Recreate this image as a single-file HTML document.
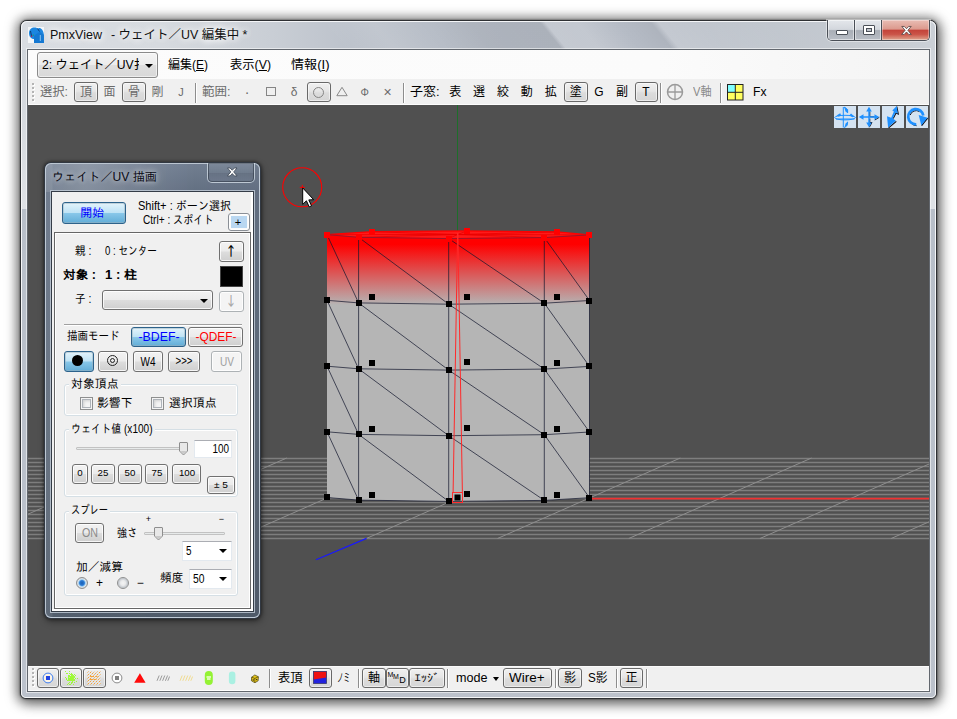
<!DOCTYPE html>
<html lang="ja"><head><meta charset="utf-8"><title>PmxView</title>
<style>
html,body{margin:0;padding:0;background:#fff;}
body{width:957px;height:719px;overflow:hidden;position:relative;font-family:"Liberation Sans","Noto Sans CJK JP",sans-serif;font-size:12px;}
.t{position:absolute;white-space:nowrap;}
.a{position:absolute;box-sizing:border-box;}
.tb{position:absolute;box-sizing:border-box;border:1px solid #696969;border-radius:3px;background:linear-gradient(#f0f0f0,#e6e6e6 45%,#dcdcdc 55%,#d6d6d6);box-shadow:inset 0 0 0 1px rgba(255,255,255,.55);}
.sep{position:absolute;width:1px;background:#8d8d8d;box-shadow:1px 0 0 #fff;}
.btn{position:absolute;box-sizing:border-box;border:1px solid #707070;border-radius:3px;background:linear-gradient(#f2f2f2,#ebebeb 48%,#dddddd 52%,#cfcfcf);box-shadow:inset 0 0 0 1px rgba(255,255,255,.8);}
.btn.dis{border-color:#adb2b5;background:#f4f4f4;}
.btn.blue{border-color:#2c628b;background:linear-gradient(#e3f3fb,#bfe3f5 48%,#88c7e9 52%,#62add7);box-shadow:inset 0 0 0 1px rgba(158,176,186,.5);}
.grp{position:absolute;box-sizing:border-box;border:1px solid #d5dfe5;border-radius:3px;box-shadow:inset 0 0 0 1px #fff;}
.cb{position:absolute;box-sizing:border-box;width:13px;height:13px;border:1px solid #8e8f8f;background:#f4f4f4;box-shadow:inset 0 0 0 1px #f4f4f4,inset 0 0 0 2px #aeb3b9,inset 2px 2px 3px 1px #cfd0d0;}
.combo{position:absolute;box-sizing:border-box;background:#fff;border:1px solid #e3e9ef;border-top-color:#abadb3;}
.arr{position:absolute;width:0;height:0;border-left:4px solid transparent;border-right:4px solid transparent;border-top:4px solid #000;}
</style></head><body>
<div class="a" style="left:20px;top:20px;width:917px;height:679px;border-radius:7px 7px 6px 6px;
box-shadow:0 0 2px rgba(0,0,0,.7),0 1px 12px 3px rgba(0,0,0,.5),2px 4px 14px rgba(0,0,0,.3);
border:1px solid #2e3033;background:#cfd5dc;"></div>
<div class="a" style="left:21px;top:21px;width:915px;height:677px;border-radius:6px 6px 5px 5px;border:1px solid rgba(255,255,255,.85);
background:
linear-gradient(51deg,rgba(255,255,255,0) 0,rgba(255,255,255,0) 250px,rgba(255,255,255,.10) 290px,rgba(255,255,255,0) 330px,rgba(0,0,0,.04) 366px,rgba(0,0,0,.05) 420px,rgba(255,255,255,.22) 424px,rgba(255,255,255,.2) 450px,rgba(255,255,255,0) 482px,rgba(0,0,0,.04) 506px,rgba(255,255,255,.2) 512px,rgba(255,255,255,.12) 545px,rgba(255,255,255,.05) 600px,rgba(255,255,255,0) 720px) 0 0/100% 28px no-repeat,
linear-gradient(to right,#d9dde2 0,#d6dadf 140px,#c9ced5 250px,#bcc2cb 330px,#b4bac4 480px,#b5bbc5 640px,#bdc3cb 740px,#c3c8cf 830px,#cbd0d6 915px) 0 0/100% 28px no-repeat,
linear-gradient(#d0d5db,#dfe2e6) 0 28px/100% 159px no-repeat,
linear-gradient(#b8bfc9,#bcc2cc) 0 187px/100% 500px no-repeat,
#bcc2cc;"></div>
<svg class="a" style="left:28px;top:27px" width="16" height="16" viewBox="0 0 16 16">
<rect width="16" height="16" fill="#f4f6f8"/>
<path d="M1 6 C1 2.5 3.5 0.5 6.5 0.5 C8 0.5 9 1 9.5 1.5 C11 0.5 13 1 14 2.5 C15.5 4.5 16 7 16 9 L16 16 L6 16 L6 12 C3 12 1 9.5 1 6 Z" fill="#1b86e0"/>
<path d="M6 16 L6 9 C8 7 10 5.5 12 5 L16 8 L16 16 Z" fill="#1478d2"/>
<path d="M2.5 4 L3.5 9 M9.5 1.5 L11.5 4.5" stroke="#0b3c78" stroke-width="1" fill="none"/>
<path d="M12.3 8 L12.3 14" stroke="#a8d4f4" stroke-width="0.8"/>
<circle cx="3.6" cy="9.3" r="0.8" fill="#c02050"/><circle cx="5.2" cy="8.2" r="0.6" fill="#20a040"/>
</svg>
<span class="t" style='left:50px;top:27px;font-size:12px;line-height:16px;color:#111;transform:scaleX(1.044);transform-origin:left center;text-shadow:0 0 6px #fff,0 0 8px #fff,0 0 10px rgba(255,255,255,.9);'>PmxView</span>
<span class="t" style='left:111.3px;top:27px;font-size:12px;line-height:16px;color:#111;transform:scaleX(1.039);transform-origin:left center;text-shadow:0 0 6px #fff,0 0 8px #fff,0 0 10px rgba(255,255,255,.9);'>- ウェイト／UV 編集中 *</span>
<div class="a" style="left:827px;top:20px;width:103px;height:21px;border:1px solid #4a4f57;border-top:none;border-radius:0 0 5px 5px;overflow:hidden;box-shadow:0 0 0 1px rgba(255,255,255,.45);">
<div class="a" style="left:0;top:0;width:27px;height:20px;background:linear-gradient(#e4e7eb,#d3d7dd 47%,#a9aeb6 53%,#b9bec6);border-right:1px solid #4a4f57;box-shadow:inset 0 0 0 1px rgba(255,255,255,.5)"></div>
<div class="a" style="left:27px;top:0;width:27px;height:20px;background:linear-gradient(#e4e7eb,#d3d7dd 47%,#a9aeb6 53%,#b9bec6);border-right:1px solid #4a4f57;box-shadow:inset 0 0 0 1px rgba(255,255,255,.5)"></div>
<div class="a" style="left:54px;top:0;width:47px;height:20px;background:linear-gradient(#e9bdb4,#dc9a8e 45%,#c4443a 52%,#cb5548 72%,#dfa58e);box-shadow:inset 0 0 0 1px rgba(255,255,255,.35)"></div>
</div>
<div class="a" style="left:836px;top:30px;width:12px;height:5px;background:#fff;border:1px solid #4b5058;border-radius:1px"></div>
<div class="a" style="left:863px;top:25px;width:12px;height:10px;border:1px solid #4b5058;background:#fff;border-radius:1px"></div><div class="a" style="left:866px;top:28px;width:6px;height:4px;border:1px solid #4b5058;background:#bfc4cb"></div>
<svg class="a" style="left:900px;top:24.5px" width="13" height="11" viewBox="0 0 16 13"><path d="M2.2 1.5 L5.3 1.5 L8 4.3 L10.7 1.5 L13.8 1.5 L9.7 6.3 L13.9 11.3 L10.7 11.3 L8 8.3 L5.3 11.3 L2.1 11.3 L6.3 6.3 Z" fill="#fff" stroke="#51403f" stroke-width="1" stroke-linejoin="round"/></svg>
<div class="a" style="left:27px;top:49px;width:903px;height:643px;border:1px solid #62676e;background:#f0f0f0;box-shadow:0 0 0 1px rgba(255,255,255,.55)"></div>
<div class="a" style="left:28px;top:50px;width:901px;height:29px;background:linear-gradient(to right,#fcfcfc 0,#fbfbfb 70%,#f4f4f4 100%)"></div>
<div class="a" style="left:28px;top:79px;width:901px;height:26px;background:#f0f0f0;border-bottom:1px solid #fdfdfd"></div>
<div class="a" style="left:28px;top:666px;width:901px;height:25px;background:#f0f0f0;border-top:1px solid #fafafa;border-bottom:1px solid #fff"></div>
<div class="tb" style="left:37px;top:52px;width:121px;height:26px;border-color:#8a8a8a;background:linear-gradient(#f4f4f4,#ececec 48%,#dedede 52%,#d8d8d8)"></div>
<div class="a" style="left:41px;top:55px;width:98px;height:20px;overflow:hidden">
<span class="t" style='left:0.5px;top:2px;font-size:12px;line-height:16px;color:#000;transform:scaleX(1.019);transform-origin:left center;'>2: ウェイト／UV扌</span>
</div>
<div class="arr" style="left:145px;top:64px"></div>
<span class="t" style='left:168px;top:57px;font-size:12px;line-height:16px;color:#000;'>編集(<u>E</u>)</span>
<span class="t" style='left:229.5px;top:57px;font-size:12px;line-height:16px;color:#000;transform:scaleX(1.025);transform-origin:left center;'>表示(<u>V</u>)</span>
<span class="t" style='left:291px;top:57px;font-size:12px;line-height:16px;color:#000;transform:scaleX(1.089);transform-origin:left center;'>情報(<u>I</u>)</span>
<div class="a" style="left:32px;top:83px;width:2px;height:2px;background:#b4b4b4;box-shadow:1px 1px 0 #fff"></div>
<div class="a" style="left:32px;top:87px;width:2px;height:2px;background:#b4b4b4;box-shadow:1px 1px 0 #fff"></div>
<div class="a" style="left:32px;top:91px;width:2px;height:2px;background:#b4b4b4;box-shadow:1px 1px 0 #fff"></div>
<div class="a" style="left:32px;top:95px;width:2px;height:2px;background:#b4b4b4;box-shadow:1px 1px 0 #fff"></div>
<div class="a" style="left:32px;top:99px;width:2px;height:2px;background:#b4b4b4;box-shadow:1px 1px 0 #fff"></div>
<span class="t" style='left:40px;top:84px;font-size:12px;line-height:16px;color:#6a6a6a;transform:scaleX(1.024);transform-origin:left center;'>選択:</span>
<div class="tb" style="left:74px;top:82px;width:24px;height:20px"></div>
<span class="t" style='left:86px;top:84px;font-size:12px;line-height:16px;color:#6a6a6a;transform:translateX(-50%);transform-origin:center center;'>頂</span>
<span class="t" style='left:109.5px;top:84px;font-size:12px;line-height:16px;color:#6a6a6a;transform:translateX(-50%);transform-origin:center center;'>面</span>
<div class="tb" style="left:122px;top:82px;width:24px;height:20px"></div>
<span class="t" style='left:134px;top:84px;font-size:12px;line-height:16px;color:#6a6a6a;transform:translateX(-50%);transform-origin:center center;'>骨</span>
<span class="t" style='left:157.5px;top:84px;font-size:12px;line-height:16px;color:#6a6a6a;transform:translateX(-50%);transform-origin:center center;'>剛</span>
<span class="t" style='left:181px;top:84px;font-size:11px;line-height:16px;color:#6a6a6a;transform:translateX(-50%);transform-origin:center center;'>J</span>
<div class="sep" style="left:195px;top:83px;height:20px"></div>
<span class="t" style='left:202px;top:84px;font-size:12px;line-height:16px;color:#6a6a6a;transform:scaleX(1.042);transform-origin:left center;'>範囲:</span>
<span class="t" style='left:247px;top:84px;font-size:14px;line-height:16px;color:#6a6a6a;transform:translateX(-50%);transform-origin:center center;'>·</span>
<div class="a" style="left:266px;top:87px;width:10px;height:9px;border:1px solid #858585"></div>
<span class="t" style='left:294px;top:83.5px;font-size:12px;line-height:16px;color:#6a6a6a;transform:translateX(-50%);transform-origin:center center;'>δ</span>
<div class="tb" style="left:307px;top:82px;width:24px;height:20px"></div>
<div class="a" style="left:313px;top:86.5px;width:11px;height:11px;border:1px solid #858585;border-radius:50%"></div>
<svg class="a" style="left:335px;top:85px" width="14" height="13" viewBox="0 0 14 13"><path d="M7 2.3 L12.2 10.7 L1.8 10.7 Z" fill="none" stroke="#8a8a8a" stroke-width="1"/></svg>
<span class="t" style='left:364.7px;top:84px;font-size:10.5px;line-height:16px;color:#6a6a6a;transform:translateX(-50%);transform-origin:center center;'>Φ</span>
<span class="t" style='left:387.5px;top:84px;font-size:14px;line-height:16px;color:#6a6a6a;transform:translateX(-50%);transform-origin:center center;'>×</span>
<div class="sep" style="left:403px;top:83px;height:20px"></div>
<span class="t" style='left:410px;top:84px;font-size:12px;line-height:16px;color:#000;transform:scaleX(1.079);transform-origin:left center;'>子窓:</span>
<span class="t" style='left:455.3px;top:84px;font-size:12px;line-height:16px;color:#000;transform:translateX(-50%);transform-origin:center center;'>表</span>
<span class="t" style='left:479px;top:84px;font-size:12px;line-height:16px;color:#000;transform:translateX(-50%);transform-origin:center center;'>選</span>
<span class="t" style='left:503px;top:84px;font-size:12px;line-height:16px;color:#000;transform:translateX(-50%);transform-origin:center center;'>絞</span>
<span class="t" style='left:526.8px;top:84px;font-size:12px;line-height:16px;color:#000;transform:translateX(-50%);transform-origin:center center;'>動</span>
<span class="t" style='left:550.8px;top:84px;font-size:12px;line-height:16px;color:#000;transform:translateX(-50%);transform-origin:center center;'>拡</span>
<div class="tb" style="left:564px;top:82px;width:24px;height:20px"></div>
<span class="t" style='left:575.8px;top:84px;font-size:12px;line-height:16px;color:#000;transform:translateX(-50%);transform-origin:center center;'>塗</span>
<span class="t" style='left:599px;top:84px;font-size:12px;line-height:16px;color:#000;transform:translateX(-50%);transform-origin:center center;'>G</span>
<span class="t" style='left:622px;top:84px;font-size:12px;line-height:16px;color:#000;transform:translateX(-50%);transform-origin:center center;'>副</span>
<div class="tb" style="left:635px;top:82px;width:23px;height:20px"></div>
<span class="t" style='left:646px;top:84px;font-size:12px;line-height:16px;color:#000;transform:translateX(-50%);transform-origin:center center;'>T</span>
<div class="sep" style="left:660px;top:83px;height:20px"></div>
<svg class="a" style="left:666px;top:83px" width="18" height="18" viewBox="0 0 18 18"><circle cx="9" cy="9" r="7.5" fill="none" stroke="#9a9a9a" stroke-width="1.5"/><path d="M9 1.5 V16.5 M1.5 9 H16.5" stroke="#9a9a9a" stroke-width="1.3"/></svg>
<span class="t" style='left:692.5px;top:84px;font-size:12px;line-height:16px;color:#8a8a8a;transform:scaleX(0.924);transform-origin:left center;'>V軸</span>
<div class="sep" style="left:720px;top:83px;height:20px"></div>
<svg class="a" style="left:727px;top:84px" width="17" height="17" viewBox="0 0 17 17"><rect x="0.5" y="0.5" width="15.5" height="15.5" fill="#ffff60" stroke="#222"/><rect x="1" y="1" width="7" height="7" fill="#80ffff"/><path d="M8.3 0.5 V16 M0.5 8.3 H16" stroke="#222" stroke-width="1"/></svg>
<span class="t" style='left:752.5px;top:84px;font-size:13px;line-height:16px;color:#000;transform:scaleX(0.934);transform-origin:left center;'>Fx</span>
<svg class="a" style="left:28px;top:105px" width="901" height="561" viewBox="28 105 901 561">
<defs><linearGradient id="cg" gradientUnits="userSpaceOnUse" x1="0" y1="231" x2="0" y2="305"><stop offset="0" stop-color="#ff0000"/><stop offset="0.18" stop-color="#ff0000"/><stop offset="1" stop-color="#b5b5b5"/></linearGradient></defs>
<rect x="28" y="105" width="901" height="561" fill="#505050"/>
<path d="M28 458.5 H929 M28 462.5 H929 M28 466.5 H929 M28 470.5 H929 M28 474.5 H929 M28 478.5 H929 M28 482.5 H929 M28 486.5 H929 M28 490.5 H929 M28 494.5 H929 M28 498.5 H929 M28 502.5 H929 M28 506.5 H929 M28 510.5 H929 M28 514.5 H929 M28 518.5 H929 M28 522.5 H929 M28 526.5 H929 M28 530.5 H929 M28 534.5 H929 M28 538.5 H929" stroke="#7e7e7e" stroke-width="1.5" fill="none"/>
<path d="M24.3 458 L-158.454 538.5 M155.5 458 L-27.254 538.5 M286.7 458 L103.946 538.5 M417.9 458 L235.146 538.5 M549.1 458 L366.346 538.5 M680.3 458 L497.546 538.5 M811.5 458 L628.746 538.5 M942.7 458 L759.946 538.5 M1073.9 458 L891.146 538.5" stroke="#8e8e8e" stroke-width="1" fill="none"/>
<path d="M589 498.6 H929" stroke="#f03232" stroke-width="1.7"/>
<path d="M366.6 538.4 L316 559.7" stroke="#1818ff" stroke-width="1.2"/>
<path d="M457.5 105 V232" stroke="#1d6e2a" stroke-width="1"/>
<polygon points="327,234.7 372,231.7 467,230.9 557,231.9 589.5,234.9 589.5,497.7 544.3,500.4 448.7,501.4 358.6,500.1 327,497.5" fill="url(#cg)"/>
<path d="M358.6 237.3 L358.6 500.1 M448.7 238.6 L448.7 501.4 M544.3 237.6 L544.3 500.4 M589.5 234.9 L589.5 497.7 M327 300.3 L358.6 302.9 L448.7 304.2 L544.3 303.2 L589.5 300.5 M327 366.2 L358.6 368.8 L448.7 370.1 L544.3 369.1 L589.5 366.4 M327 431.8 L358.6 434.4 L448.7 435.7 L544.3 434.7 L589.5 432 M327 497.5 L358.6 500.1 L448.7 501.4 L544.3 500.4 L589.5 497.7 M327 234.7 L358.6 302.9 M358.6 237.3 L448.7 304.2 M448.7 238.6 L544.3 303.2 M544.3 237.6 L589.5 300.5 M327 300.3 L358.6 368.8 M358.6 302.9 L448.7 370.1 M448.7 304.2 L544.3 369.1 M544.3 303.2 L589.5 366.4 M327 366.2 L358.6 434.4 M358.6 368.8 L448.7 435.7 M448.7 370.1 L544.3 434.7 M544.3 369.1 L589.5 432 M327 431.8 L358.6 500.1 M358.6 434.4 L448.7 501.4 M448.7 435.7 L544.3 500.4 M544.3 434.7 L589.5 497.7" stroke="#14182e" stroke-width="0.8" fill="none" stroke-opacity=".9"/>
<polygon points="327,234.7 372,231.7 467,230.9 557,231.9 589.5,234.9 544.3,237.6 448.7,238.6 358.6,237.3" fill="#ff1a1a" stroke="#ff0000" stroke-width="1.2"/>
<path d="M457.5 234.5 L327 234.7 M457.5 234.5 L372 231.7 M457.5 234.5 L467 230.9 M457.5 234.5 L557 231.9 M457.5 234.5 L589.5 234.9 M457.5 234.5 L544.3 237.6 M457.5 234.5 L448.7 238.6 M457.5 234.5 L358.6 237.3" stroke="#e80000" stroke-width="0.8" fill="none"/>
<path d="M327 234.7 L358.6 237.3 L448.7 238.6 L544.3 237.6 L589.5 234.9" stroke="#3a2a55" stroke-width="0.7" fill="none" stroke-opacity=".7"/>
<path d="M457.6 233 L453.1 492.5 M457.9 233 L462.4 492.5" stroke="#ff2a2a" stroke-width="1" fill="none"/>
<rect x="452.5" y="492.5" width="10" height="10" fill="none" stroke="#ff3030" stroke-width="1"/>
<rect x="324" y="232" width="6" height="6" fill="#ff0000"/><rect x="356" y="234" width="6" height="6" fill="#ff0000"/><rect x="446" y="236" width="6" height="6" fill="#ff0000"/><rect x="541" y="235" width="6" height="6" fill="#ff0000"/><rect x="586" y="232" width="6" height="6" fill="#ff0000"/><rect x="369" y="229" width="6" height="6" fill="#ff0000"/><rect x="464" y="228" width="6" height="6" fill="#ff0000"/><rect x="554" y="229" width="6" height="6" fill="#ff0000"/><rect x="324" y="297" width="6" height="6" fill="#000"/><rect x="356" y="300" width="6" height="6" fill="#000"/><rect x="446" y="301" width="6" height="6" fill="#000"/><rect x="541" y="300" width="6" height="6" fill="#000"/><rect x="586" y="298" width="6" height="6" fill="#000"/><rect x="369" y="294" width="6" height="6" fill="#000"/><rect x="464" y="294" width="6" height="6" fill="#000"/><rect x="554" y="294" width="6" height="6" fill="#000"/><rect x="324" y="363" width="6" height="6" fill="#000"/><rect x="356" y="366" width="6" height="6" fill="#000"/><rect x="446" y="367" width="6" height="6" fill="#000"/><rect x="541" y="366" width="6" height="6" fill="#000"/><rect x="586" y="363" width="6" height="6" fill="#000"/><rect x="369" y="360" width="6" height="6" fill="#000"/><rect x="464" y="359" width="6" height="6" fill="#000"/><rect x="554" y="360" width="6" height="6" fill="#000"/><rect x="324" y="429" width="6" height="6" fill="#000"/><rect x="356" y="431" width="6" height="6" fill="#000"/><rect x="446" y="433" width="6" height="6" fill="#000"/><rect x="541" y="432" width="6" height="6" fill="#000"/><rect x="586" y="429" width="6" height="6" fill="#000"/><rect x="369" y="426" width="6" height="6" fill="#000"/><rect x="464" y="425" width="6" height="6" fill="#000"/><rect x="554" y="426" width="6" height="6" fill="#000"/><rect x="324" y="494" width="6" height="6" fill="#000"/><rect x="356" y="497" width="6" height="6" fill="#000"/><rect x="446" y="498" width="6" height="6" fill="#000"/><rect x="541" y="497" width="6" height="6" fill="#000"/><rect x="586" y="495" width="6" height="6" fill="#000"/><rect x="369" y="492" width="6" height="6" fill="#000"/><rect x="464" y="491" width="6" height="6" fill="#000"/><rect x="554" y="492" width="6" height="6" fill="#000"/>
<rect x="454.5" y="494.5" width="6" height="6" fill="#000"/>
<circle cx="302.2" cy="187.3" r="19.5" fill="none" stroke="#ff0000" stroke-width="1.1"/>
<path d="M299.8 187.4 H304.8 M302.3 184.9 V189.9" stroke="#ff0000" stroke-width="1"/>
<path d="M302.7 187.9 V204.4 L306.4 200.8 L309.2 206.9 L311.5 205.8 L308.8 199.9 L313.7 199.7 Z" fill="#fff" stroke="#000" stroke-width="1" stroke-linejoin="miter"/>
<rect x="834" y="106" width="22" height="22" fill="#d5e3f1"/><rect x="858" y="106" width="22" height="22" fill="#d5e3f1"/><rect x="882" y="106" width="22" height="22" fill="#d5e3f1"/><rect x="906" y="106" width="22" height="22" fill="#d5e3f1"/>
<g transform="translate(834,106)" stroke="#1e90ff" fill="none" stroke-width="1"><path d="M9.3 1 V21.5 M2 13 H20.5"/><ellipse cx="11" cy="11.6" rx="10.3" ry="2.3"/><path d="M10 1.2 C13 1.5 14 5 13.6 7 M10.2 21.5 C12.5 21 13.8 18.5 13.6 16"/><path d="M10 0.8 L14.2 3.8 L13.8 7.3 L11.5 5.5 Z M10.5 21.5 L13.3 19.3 L14 15.3 L11.6 17.5 Z M2.5 9.5 L6.2 7.3 L7.3 9.8 L4.5 10.5 Z M20.5 10.5 L17 7.5 L15.5 9.3 L18.3 11.3 Z" fill="#1e90ff" stroke="none"/></g>
<g transform="translate(858,106)"><path d="M11.8 5.5 V10.8 H16.5 M16.8 14 L21.3 11.3 M11.8 12.5 V16.5 H14 L11.3 21.3" stroke="#0a0a14" stroke-width="0.9" fill="none"/><path d="M11 0.8 L13.8 5.5 H11.7 V10.3 H16.5 V8.2 L21.2 11 L16.5 13.8 V11.7 H11.7 V16.5 H13.8 L11 21.2 L8.2 16.5 H10.3 V11.7 H5.5 V13.8 L0.8 11 L5.5 8.2 V10.3 H10.3 V5.5 H8.2 Z" fill="#1e90ff"/></g>
<g transform="translate(882,106)"><path d="M6.6 21.8 L14.3 15.4 M11.2 12.6 L14.3 6.6 M14.8 0.5 L16.3 8 L14 7" stroke="#0a0a14" stroke-width="1.1" fill="none"/><path d="M14.7 0 L15.8 7.8 L13.6 6.5 L10.9 12.6 L13.8 14.8 L6.1 21.6 L5 10.3 L9.2 11.8 L11.9 5.6 L10.3 4.4 Z" fill="#1e90ff"/></g>
<g transform="translate(906,106)"><path d="M10.5 19.7 A8.3 8.3 0 0 1 5 17" stroke="#0a0a14" stroke-width="1" fill="none"/><path d="M4.2 9 A6.2 6.2 0 0 1 13.5 5.6" stroke="#0a0a14" stroke-width="1" fill="none"/><path d="M15.6 19.7 L21.6 12.2" stroke="#0a0a14" stroke-width="1.2" fill="none"/><path d="M10.3 18.3 A7.6 7.6 0 1 1 17.3 9.5" stroke="#1e90ff" stroke-width="2.7" fill="none"/><path d="M12.7 9 L21.5 11.8 L15.3 19.6 Z" fill="#1e90ff"/></g>
</svg>
<div class="a" style="left:44px;top:162px;width:217px;height:457px;border-radius:7px;border:1px solid rgba(20,22,26,.55);
box-shadow:0 0 3px 1px rgba(0,0,0,.35),1px 3px 7px rgba(0,0,0,.35);background:#556274"></div>
<div class="a" style="left:45px;top:163px;width:215px;height:455px;border-radius:6px;border:1px solid rgba(214,224,234,.8);
background:linear-gradient(to right,rgba(255,255,255,.12) 0,rgba(255,255,255,.20) 40px,rgba(255,255,255,.06) 110px,rgba(255,255,255,0) 150px) 0 0/100% 28px no-repeat,
linear-gradient(to right,rgba(255,255,255,.07) 0,rgba(255,255,255,.07) 6px,rgba(255,255,255,0) 7px,rgba(0,0,0,.04) 100%),linear-gradient(#748194 0,#667386 28px,#5f6b7b 55%,#525e6d 100%)"></div>
<div class="a" style="left:50px;top:190px;width:205px;height:423px;border:1px solid rgba(196,206,217,.8);"></div>
<div class="a" style="left:51px;top:191px;width:203px;height:421px;border:1px solid #343c47;background:#f0f0f0;box-shadow:inset -2px -2px 0 #fff"></div>
<span class="t" style='left:52px;top:168.5px;font-size:12px;line-height:16px;color:#0a0a14;font-family:"Liberation Sans","IPAGothic","Noto Sans CJK JP",sans-serif;transform:scaleX(1.009);transform-origin:left center;text-shadow:0 0 5px rgba(255,255,255,.5),0 0 8px rgba(255,255,255,.4),0 0 11px rgba(255,255,255,.3);'>ウェイト／UV 描画</span>
<div class="a" style="left:207px;top:163px;width:48px;height:20px;border:1px solid rgba(214,224,234,.75);border-top:none;border-radius:0 0 5px 5px;background:linear-gradient(rgba(255,255,255,.10),rgba(255,255,255,.03) 50%,rgba(0,0,0,.05) 52%,rgba(255,255,255,.04));box-shadow:inset 0 0 0 1px rgba(40,50,62,.55)"></div>
<svg class="a" style="left:225.5px;top:167px" width="12.5" height="10" viewBox="0 0 15 12"><path d="M1.8 1.2 L4.9 1.2 L7.5 3.9 L10.1 1.2 L13.2 1.2 L9.2 5.9 L13.3 10.7 L10.1 10.7 L7.5 7.9 L4.9 10.7 L1.7 10.7 L5.8 5.9 Z" fill="#fff" stroke="#3c4654" stroke-width="1" stroke-linejoin="round"/></svg>
<div class="btn blue" style="left:62px;top:202px;width:64px;height:22px"></div>
<span class="t" style='left:92.3px;top:205px;font-size:12px;line-height:16px;color:#0000ff;font-family:"Liberation Sans","IPAGothic","Noto Sans CJK JP",sans-serif;transform:translateX(-50%);transform-origin:center center;'>開始</span>
<span class="t" style='left:137.8px;top:198px;font-size:12px;line-height:16px;color:#000;font-family:"Liberation Sans","IPAGothic","Noto Sans CJK JP",sans-serif;transform:scaleX(0.921);transform-origin:left center;'>Shift+ : ボーン選択</span>
<span class="t" style='left:142.6px;top:212px;font-size:12px;line-height:16px;color:#000;font-family:"Liberation Sans","IPAGothic","Noto Sans CJK JP",sans-serif;transform:scaleX(0.843);transform-origin:left center;'>Ctrl+ : スポイト</span>
<div class="btn" style="left:228px;top:213px;width:22px;height:18px;border-color:#8a8f96;background:#fbfbfb"></div><div class="a" style="left:231px;top:216px;width:16px;height:12px;background:#b9d7f1"></div>
<span class="t" style='left:238px;top:213.5px;font-size:11px;line-height:16px;color:#000;transform:translateX(-50%);transform-origin:center center;'>+</span>
<div class="a" style="left:54px;top:232px;width:197px;height:377px;border:1px solid #666;box-shadow:inset 0 0 0 1px #fff;background:#f0f0f0"></div>
<span class="t" style='left:74.5px;top:243px;font-size:12px;line-height:16px;color:#000;font-family:"Liberation Sans","IPAGothic","Noto Sans CJK JP",sans-serif;transform:scaleX(0.884);transform-origin:left center;'>親 :</span>
<span class="t" style='left:105px;top:243px;font-size:12px;line-height:16px;color:#000;font-family:"Liberation Sans","IPAGothic","Noto Sans CJK JP",sans-serif;transform:scaleX(0.804);transform-origin:left center;'>0 : センター</span>
<div class="btn" style="left:219px;top:241px;width:25px;height:21px"></div>
<span class="t" style='left:231px;top:242.5px;font-size:13.5px;line-height:16px;color:#000;font-family:"IPAGothic","Noto Sans CJK JP",sans-serif;transform:translateX(-50%);transform-origin:center center;'>↑</span>
<span class="t" style='left:62.5px;top:266.8px;font-size:12px;line-height:16px;color:#000;font-weight:bold;font-family:"Liberation Sans","IPAGothic","Noto Sans CJK JP",sans-serif;transform:scaleX(1.053);transform-origin:left center;'>対象 :</span>
<span class="t" style='left:105px;top:266.8px;font-size:12px;line-height:16px;color:#000;font-weight:bold;font-family:"Liberation Sans","IPAGothic","Noto Sans CJK JP",sans-serif;transform:scaleX(1.091);transform-origin:left center;'>1 : 柱</span>
<div class="a" style="left:220px;top:266px;width:23px;height:21px;background:#000;border:1px solid #444"></div>
<span class="t" style='left:75px;top:291.3px;font-size:12px;line-height:16px;color:#000;font-family:"Liberation Sans","IPAGothic","Noto Sans CJK JP",sans-serif;transform:scaleX(0.884);transform-origin:left center;'>子 :</span>
<div class="btn" style="left:102px;top:290px;width:111px;height:20px"></div>
<div class="arr" style="left:200.3px;top:298.7px;border-left-width:4px;border-right-width:4px;border-top-width:4.5px"></div>
<div class="btn dis" style="left:219px;top:291px;width:25px;height:21px"></div>
<span class="t" style='left:231px;top:292.5px;font-size:13.5px;line-height:16px;color:#a8a8a8;font-family:"IPAGothic","Noto Sans CJK JP",sans-serif;transform:translateX(-50%);transform-origin:center center;'>↓</span>
<div class="a" style="left:64px;top:324px;width:178px;height:2px;border-top:1px solid #a0a0a0;border-bottom:1px solid #fff"></div>
<span class="t" style='left:67px;top:327.5px;font-size:12px;line-height:16px;color:#000;font-family:"Liberation Sans","IPAGothic","Noto Sans CJK JP",sans-serif;transform:scaleX(0.875);transform-origin:left center;'>描画モード</span>
<div class="btn blue" style="left:131px;top:327px;width:55px;height:20px"></div>
<span class="t" style='left:158.5px;top:329.2px;font-size:12.5px;line-height:16px;color:#0000ff;font-family:"Liberation Sans","IPAGothic","Noto Sans CJK JP",sans-serif;transform:translateX(-50%) scaleX(0.984);transform-origin:center center;'>-BDEF-</span>
<div class="btn" style="left:188px;top:327px;width:55px;height:20px"></div>
<span class="t" style='left:215.5px;top:329.2px;font-size:12.5px;line-height:16px;color:#ff0000;font-family:"Liberation Sans","IPAGothic","Noto Sans CJK JP",sans-serif;transform:translateX(-50%) scaleX(0.952);transform-origin:center center;'>-QDEF-</span>
<div class="btn blue" style="left:64px;top:351px;width:30px;height:21px"></div>
<div class="a" style="left:72px;top:355px;width:11px;height:11px;border-radius:50%;background:#000"></div>
<div class="btn" style="left:98px;top:351px;width:30px;height:21px"></div>
<div class="a" style="left:106.5px;top:355px;width:11px;height:11px;border-radius:50%;border:1px solid #222"></div><div class="a" style="left:109.5px;top:358px;width:5px;height:5px;border-radius:50%;border:1px solid #222"></div>
<div class="btn" style="left:133px;top:351px;width:30px;height:21px"></div>
<span class="t" style='left:148px;top:353.5px;font-size:12px;line-height:16px;color:#000;font-family:"Liberation Sans","IPAGothic","Noto Sans CJK JP",sans-serif;transform:translateX(-50%) scaleX(0.833);transform-origin:center center;'>W4</span>
<div class="btn" style="left:168px;top:351px;width:32px;height:21px"></div>
<span class="t" style='left:183.5px;top:353.3px;font-size:12px;line-height:16px;color:#000;font-family:"Liberation Sans","IPAGothic","Noto Sans CJK JP",sans-serif;transform:translateX(-50%) scaleX(0.808);transform-origin:center center;'>&gt;&gt;&gt;</span>
<div class="btn dis" style="left:211px;top:351px;width:31px;height:21px"></div>
<span class="t" style='left:226.5px;top:353.5px;font-size:12px;line-height:16px;color:#a0a0a0;font-family:"Liberation Sans","IPAGothic","Noto Sans CJK JP",sans-serif;transform:translateX(-50%) scaleX(0.840);transform-origin:center center;'>UV</span>
<div class="grp" style="left:64px;top:384px;width:174px;height:32px"></div>
<div class="a" style="left:69px;top:378px;width:52px;height:12px;background:#f0f0f0"></div>
<span class="t" style='left:71.3px;top:376.3px;font-size:12px;line-height:16px;color:#000;font-family:"Liberation Sans","IPAGothic","Noto Sans CJK JP",sans-serif;transform:scaleX(0.990);transform-origin:left center;'>対象頂点</span>
<div class="cb" style="left:80px;top:397px"></div>
<span class="t" style='left:97.2px;top:395px;font-size:12px;line-height:16px;color:#000;font-family:"Liberation Sans","IPAGothic","Noto Sans CJK JP",sans-serif;transform:scaleX(0.986);transform-origin:left center;'>影響下</span>
<div class="cb" style="left:151px;top:397px"></div>
<span class="t" style='left:168.6px;top:395px;font-size:12px;line-height:16px;color:#000;font-family:"Liberation Sans","IPAGothic","Noto Sans CJK JP",sans-serif;transform:scaleX(0.990);transform-origin:left center;'>選択頂点</span>
<div class="grp" style="left:64px;top:429px;width:174px;height:68px"></div>
<div class="a" style="left:69px;top:423px;width:86px;height:12px;background:#f0f0f0"></div>
<span class="t" style='left:71.3px;top:420.8px;font-size:12px;line-height:16px;color:#000;font-family:"Liberation Sans","IPAGothic","Noto Sans CJK JP",sans-serif;transform:scaleX(0.837);transform-origin:left center;'>ウェイト値 (x100)</span>
<div class="a" style="left:76px;top:447px;width:109px;height:3px;border:1px solid #c2c2c2;border-radius:1px;background:#e7eaea"></div>
<svg class="a" style="left:179px;top:442px" width="10" height="14" viewBox="0 0 10 14"><path d="M1 0.5 H8 Q8.5 0.5 8.5 1 V9 L4.5 13 L0.5 9 V1 Q0.5 0.5 1 0.5 Z" fill="#e8e8e8" stroke="#8e8e8e" stroke-width="1"/><path d="M1.5 9 L4.5 12 L7.5 9" fill="#c9c9c9" stroke="none"/></svg>
<div class="a" style="left:194px;top:440px;width:38px;height:18px;background:#fff;border:1px solid #e3e9ef;border-top-color:#abadb3"></div>
<span class="t" style='left:229px;top:441.3px;font-size:12px;line-height:16px;color:#000;font-family:"Liberation Sans","IPAGothic","Noto Sans CJK JP",sans-serif;transform:translateX(-100%) scaleX(0.824);transform-origin:right center;'>100</span>
<div class="btn" style="left:72px;top:464px;width:16px;height:20px"></div>
<span class="t" style='left:80px;top:465.3px;font-size:9.5px;line-height:16px;color:#000;font-family:"Liberation Sans","IPAGothic","Noto Sans CJK JP",sans-serif;transform:translateX(-50%) scaleX(1.019);transform-origin:center center;'>0</span>
<div class="btn" style="left:91px;top:464px;width:24px;height:20px"></div>
<span class="t" style='left:103px;top:465.3px;font-size:9.5px;line-height:16px;color:#000;font-family:"Liberation Sans","IPAGothic","Noto Sans CJK JP",sans-serif;transform:translateX(-50%) scaleX(1.021);transform-origin:center center;'>25</span>
<div class="btn" style="left:118px;top:464px;width:24px;height:20px"></div>
<span class="t" style='left:130px;top:465.3px;font-size:9.5px;line-height:16px;color:#000;font-family:"Liberation Sans","IPAGothic","Noto Sans CJK JP",sans-serif;transform:translateX(-50%) scaleX(1.021);transform-origin:center center;'>50</span>
<div class="btn" style="left:145px;top:464px;width:23px;height:20px"></div>
<span class="t" style='left:156.5px;top:465.3px;font-size:9.5px;line-height:16px;color:#000;font-family:"Liberation Sans","IPAGothic","Noto Sans CJK JP",sans-serif;transform:translateX(-50%) scaleX(1.021);transform-origin:center center;'>75</span>
<div class="btn" style="left:172px;top:464px;width:29px;height:20px"></div>
<span class="t" style='left:186.5px;top:465.3px;font-size:9.5px;line-height:16px;color:#000;font-family:"Liberation Sans","IPAGothic","Noto Sans CJK JP",sans-serif;transform:translateX(-50%) scaleX(1.021);transform-origin:center center;'>100</span>
<div class="btn" style="left:207px;top:476px;width:28px;height:18px"></div>
<span class="t" style='left:221px;top:476.6px;font-size:9.5px;line-height:16px;color:#000;font-family:"Liberation Sans","IPAGothic","Noto Sans CJK JP",sans-serif;transform:translateX(-50%) scaleX(1.065);transform-origin:center center;'>± 5</span>
<div class="grp" style="left:64px;top:511px;width:174px;height:85px"></div>
<div class="a" style="left:69px;top:505px;width:41px;height:12px;background:#f0f0f0"></div>
<span class="t" style='left:71.3px;top:502.3px;font-size:12px;line-height:16px;color:#000;font-family:"Liberation Sans","IPAGothic","Noto Sans CJK JP",sans-serif;transform:scaleX(0.771);transform-origin:left center;'>スプレー</span>
<span class="t" style='left:148.3px;top:510.5px;font-size:9px;line-height:16px;color:#000;font-family:"Liberation Sans","IPAGothic","Noto Sans CJK JP",sans-serif;transform:translateX(-50%);transform-origin:center center;'>+</span>
<span class="t" style='left:221.3px;top:510.5px;font-size:9px;line-height:16px;color:#000;font-family:"Liberation Sans","IPAGothic","Noto Sans CJK JP",sans-serif;transform:translateX(-50%);transform-origin:center center;'>−</span>
<div class="btn" style="left:75px;top:523px;width:29px;height:20px"></div>
<span class="t" style='left:89.5px;top:525px;font-size:12px;line-height:16px;color:#8a8a8a;font-family:"Liberation Sans","IPAGothic","Noto Sans CJK JP",sans-serif;transform:translateX(-50%) scaleX(0.889);transform-origin:center center;'>ON</span>
<span class="t" style='left:116.5px;top:525px;font-size:12px;line-height:16px;color:#000;font-family:"Liberation Sans","IPAGothic","Noto Sans CJK JP",sans-serif;transform:scaleX(0.854);transform-origin:left center;'>強さ</span>
<div class="a" style="left:144px;top:532px;width:81px;height:3px;border:1px solid #c2c2c2;border-radius:1px;background:#e7eaea"></div>
<svg class="a" style="left:154px;top:527px" width="10" height="14" viewBox="0 0 10 14"><path d="M1 0.5 H8 Q8.5 0.5 8.5 1 V9 L4.5 13 L0.5 9 V1 Q0.5 0.5 1 0.5 Z" fill="#e8e8e8" stroke="#8e8e8e" stroke-width="1"/><path d="M1.5 9 L4.5 12 L7.5 9" fill="#c9c9c9" stroke="none"/></svg>
<div class="combo" style="left:182px;top:541px;width:50px;height:20px"></div>
<span class="t" style='left:185.5px;top:542.7px;font-size:12px;line-height:16px;color:#000;font-family:"Liberation Sans","IPAGothic","Noto Sans CJK JP",sans-serif;transform:scaleX(0.822);transform-origin:left center;'>5</span>
<div class="arr" style="left:219.2px;top:549.3px;border-left-width:4px;border-right-width:4px;border-top-width:4.5px"></div>
<span class="t" style='left:75.8px;top:558.5px;font-size:12px;line-height:16px;color:#000;font-family:"Liberation Sans","IPAGothic","Noto Sans CJK JP",sans-serif;transform:scaleX(0.979);transform-origin:left center;'>加／減算</span>
<div class="a" style="left:76px;top:577px;width:12px;height:12px;border-radius:50%;border:1px solid #8e8f8f;background:radial-gradient(circle at 50% 50%,#1c5fb0 0,#2b7bd6 2.4px,#9ccdf0 3.4px,#e4e8ec 4.2px,#c9ced4 5px,#f4f4f4 5.6px)"></div>
<span class="t" style='left:99.5px;top:574.8px;font-size:12px;line-height:16px;color:#000;font-family:"Liberation Sans","IPAGothic","Noto Sans CJK JP",sans-serif;transform:translateX(-50%);transform-origin:center center;'>+</span>
<div class="a" style="left:117px;top:577px;width:12px;height:12px;border-radius:50%;border:1px solid #8e8f8f;background:radial-gradient(circle at 50% 50%,#f4f4f4 0,#e9eaeb 2.5px,#c4c9cf 4.5px,#eeeeee 5.6px)"></div>
<span class="t" style='left:140.3px;top:574.8px;font-size:12px;line-height:16px;color:#000;font-family:"Liberation Sans","IPAGothic","Noto Sans CJK JP",sans-serif;transform:translateX(-50%);transform-origin:center center;'>−</span>
<span class="t" style='left:159.5px;top:569.5px;font-size:12px;line-height:16px;color:#000;font-family:"Liberation Sans","IPAGothic","Noto Sans CJK JP",sans-serif;transform:scaleX(0.979);transform-origin:left center;'>頻度</span>
<div class="combo" style="left:189px;top:569px;width:43px;height:20px"></div>
<span class="t" style='left:192.5px;top:570.7px;font-size:12px;line-height:16px;color:#000;font-family:"Liberation Sans","IPAGothic","Noto Sans CJK JP",sans-serif;transform:scaleX(0.861);transform-origin:left center;'>50</span>
<div class="arr" style="left:219.2px;top:577.3px;border-left-width:4px;border-right-width:4px;border-top-width:4.5px"></div>
<div class="a" style="left:32px;top:668px;width:2px;height:2px;background:#b4b4b4;box-shadow:1px 1px 0 #fff"></div>
<div class="a" style="left:32px;top:672px;width:2px;height:2px;background:#b4b4b4;box-shadow:1px 1px 0 #fff"></div>
<div class="a" style="left:32px;top:676px;width:2px;height:2px;background:#b4b4b4;box-shadow:1px 1px 0 #fff"></div>
<div class="a" style="left:32px;top:680px;width:2px;height:2px;background:#b4b4b4;box-shadow:1px 1px 0 #fff"></div>
<div class="a" style="left:32px;top:684px;width:2px;height:2px;background:#b4b4b4;box-shadow:1px 1px 0 #fff"></div>
<div class="tb" style="left:37px;top:668px;width:22px;height:20px"></div>
<div class="tb" style="left:60px;top:668px;width:22px;height:20px"></div>
<div class="tb" style="left:83px;top:668px;width:23px;height:20px"></div>
<svg class="a" style="left:41px;top:671px" width="14" height="14" viewBox="0 0 14 14"><circle cx="7" cy="7" r="4.9" fill="#fbf3e6" stroke="#3a7cf0" stroke-width="1"/><rect x="5" y="5" width="4" height="4" fill="#2244e0"/></svg>
<svg class="a" style="left:63px;top:670px" width="16" height="16" viewBox="0 0 16 16"><circle cx="8" cy="8.2" r="2.2" fill="#a0ff30" fill-opacity=".5"/><g fill="#98fb2a" fill-opacity=".9"><rect x="10.0" y="10.0" width="1" height="1"/><rect x="10.0" y="14.0" width="1" height="1"/><rect x="10.0" y="5.0" width="1" height="1"/><rect x="10.0" y="6.0" width="1" height="1"/><rect x="10.0" y="7.0" width="1" height="1"/><rect x="10.0" y="8.0" width="1" height="1"/><rect x="10.0" y="9.0" width="1" height="1"/><rect x="11.0" y="10.0" width="1" height="1"/><rect x="11.0" y="12.0" width="1" height="1"/><rect x="11.0" y="4.0" width="1" height="1"/><rect x="11.0" y="6.0" width="1" height="1"/><rect x="11.0" y="7.0" width="1" height="1"/><rect x="11.0" y="9.0" width="1" height="1"/><rect x="12.0" y="5.0" width="1" height="1"/><rect x="12.0" y="8.0" width="1" height="1"/><rect x="13.0" y="11.0" width="1" height="1"/><rect x="14.0" y="8.0" width="1" height="1"/><rect x="2.0" y="1.0" width="1" height="1"/><rect x="2.0" y="7.0" width="1" height="1"/><rect x="3.0" y="3.0" width="1" height="1"/><rect x="3.0" y="8.0" width="1" height="1"/><rect x="3.0" y="9.0" width="1" height="1"/><rect x="4.0" y="10.0" width="1" height="1"/><rect x="4.0" y="14.0" width="1" height="1"/><rect x="4.0" y="3.0" width="1" height="1"/><rect x="5.0" y="10.0" width="1" height="1"/><rect x="5.0" y="13.0" width="1" height="1"/><rect x="5.0" y="5.0" width="1" height="1"/><rect x="5.0" y="6.0" width="1" height="1"/><rect x="5.0" y="7.0" width="1" height="1"/><rect x="5.0" y="8.0" width="1" height="1"/><rect x="5.0" y="9.0" width="1" height="1"/><rect x="6.0" y="1.0" width="1" height="1"/><rect x="6.0" y="10.0" width="1" height="1"/><rect x="6.0" y="12.0" width="1" height="1"/><rect x="6.0" y="14.0" width="1" height="1"/><rect x="6.0" y="3.0" width="1" height="1"/><rect x="6.0" y="5.0" width="1" height="1"/><rect x="6.0" y="6.0" width="1" height="1"/><rect x="6.0" y="8.0" width="1" height="1"/><rect x="6.0" y="9.0" width="1" height="1"/><rect x="7.0" y="10.0" width="1" height="1"/><rect x="7.0" y="14.0" width="1" height="1"/><rect x="7.0" y="4.0" width="1" height="1"/><rect x="7.0" y="6.0" width="1" height="1"/><rect x="7.0" y="7.0" width="1" height="1"/><rect x="7.0" y="8.0" width="1" height="1"/><rect x="7.0" y="9.0" width="1" height="1"/><rect x="8.0" y="10.0" width="1" height="1"/><rect x="8.0" y="12.0" width="1" height="1"/><rect x="8.0" y="13.0" width="1" height="1"/><rect x="8.0" y="3.0" width="1" height="1"/><rect x="8.0" y="4.0" width="1" height="1"/><rect x="8.0" y="5.0" width="1" height="1"/><rect x="8.0" y="6.0" width="1" height="1"/><rect x="8.0" y="7.0" width="1" height="1"/><rect x="8.0" y="8.0" width="1" height="1"/><rect x="8.0" y="9.0" width="1" height="1"/><rect x="9.0" y="10.0" width="1" height="1"/><rect x="9.0" y="11.0" width="1" height="1"/><rect x="9.0" y="12.0" width="1" height="1"/><rect x="9.0" y="4.0" width="1" height="1"/><rect x="9.0" y="5.0" width="1" height="1"/><rect x="9.0" y="6.0" width="1" height="1"/><rect x="9.0" y="7.0" width="1" height="1"/><rect x="9.0" y="8.0" width="1" height="1"/><rect x="9.0" y="9.0" width="1" height="1"/></g></svg>
<svg class="a" style="left:87px;top:671px" width="14" height="14" viewBox="0 0 14 14"><rect x="0.5" y="0.5" width="13" height="13" fill="#e4e9f2" fill-opacity=".7"/><path d="M0.5 1.5 L1.5 0.5 M0.5 4.5 L4.5 0.5 M0.5 7.5 L7.5 0.5 M0.5 10.5 L10.5 0.5 M0.5 13.5 L13.5 0.5 M3.5 13.5 L13.5 3.5 M6.5 13.5 L13.5 6.5 M9.5 13.5 L13.5 9.5 M12.5 13.5 L13.5 12.5" stroke="#f5a338" stroke-width="1" stroke-dasharray="2.2 1" fill="none"/><path d="M3 5.5 H7 M9 5.5 H10.5 M2.5 8.5 H5 M6.5 8.5 H9.5" stroke="#f5a338" stroke-width="1"/></svg>
<svg class="a" style="left:110px;top:671px" width="14" height="14" viewBox="0 0 14 14"><circle cx="7" cy="7" r="4.9" fill="#fff" stroke="#8a8a8a" stroke-width="1"/><rect x="5" y="5" width="4" height="4" fill="#808080"/></svg>
<svg class="a" style="left:133px;top:672px" width="14" height="12" viewBox="0 0 14 12"><path d="M6.9 1.3 L12.6 10.8 L1.2 10.8 Z" fill="#ff0a0a"/></svg>
<svg class="a" style="left:156px;top:674px" width="14" height="8" viewBox="0 0 14 8"><path d="M1 6.8 L3.2 1.5 M3.8 6.8 L6 1.5 M6.6 6.8 L8.8 1.5 M9.4 6.8 L11.6 1.5 M11.8 6.8 L13.6 2.5" stroke="#9a9a9a" stroke-width="1"/></svg>
<svg class="a" style="left:179px;top:674px" width="14" height="8" viewBox="0 0 14 8"><path d="M1 6.8 L3.2 1.5 M3.8 6.8 L6 1.5 M6.6 6.8 L8.8 1.5 M9.4 6.8 L11.6 1.5 M11.8 6.8 L13.6 2.5" stroke="#f1dc90" stroke-width="1"/></svg>
<svg class="a" style="left:203px;top:669px" width="12" height="18" viewBox="0 0 12 18"><rect x="1.8" y="2" width="8" height="14" rx="4" fill="#94f234"/><path d="M3.5 8 H8 M4 10 H7.5" stroke="#efffd8" stroke-width="1.4"/></svg>
<svg class="a" style="left:226px;top:669px" width="12" height="18" viewBox="0 0 12 18"><rect x="2.9" y="2.5" width="6.5" height="12.8" rx="3.2" fill="#aaf0e2"/></svg>
<svg class="a" style="left:250.3px;top:673.6px" width="9.6" height="9.6" viewBox="0 0 12 12"><path d="M2 4 L6 1.2 L10.5 3.5 L10.2 8.5 L6 11 L1.8 8.5 Z" fill="#e8c81a" stroke="#3a3208" stroke-width="0.8"/><path d="M6 5.5 L6 11 M2 4 L6 5.5 L10.5 3.5" stroke="#3a3208" stroke-width="0.8" fill="none"/><circle cx="4" cy="7.5" r="0.9" fill="#222"/><circle cx="8.3" cy="7" r="0.9" fill="#222"/></svg>
<div class="sep" style="left:269px;top:669px;height:19px"></div>
<span class="t" style='left:278px;top:670px;font-size:12px;line-height:16px;color:#000;transform:scaleX(1.020);transform-origin:left center;'>表頂</span>
<div class="tb" style="left:309px;top:668px;width:23px;height:20px"></div>
<svg class="a" style="left:313px;top:671px" width="14" height="13" viewBox="0 0 14 13"><rect x="0.5" y="0.5" width="13" height="12" fill="#2222dd"/><path d="M0.5 0.5 H13.5 V6.5 L0.5 8.5 Z" fill="#ee1111"/><rect x="0.5" y="0.5" width="13" height="12" fill="none" stroke="#3a3a6a" stroke-width="0.8"/></svg>
<span class="t" style='left:337px;top:670px;font-size:11.5px;line-height:16px;color:#000;transform:scaleX(0.565);transform-origin:left center;'>ノミ</span>
<div class="sep" style="left:358px;top:669px;height:19px"></div>
<div class="tb" style="left:362px;top:668px;width:24px;height:20px"></div>
<span class="t" style='left:374px;top:670px;font-size:12px;line-height:16px;color:#000;transform:translateX(-50%);transform-origin:center center;'>軸</span>
<div class="tb" style="left:386px;top:668px;width:23px;height:20px"></div>
<span class="t" style='left:390.5px;top:666.5px;font-size:7px;line-height:16px;color:#000;transform:translateX(-50%);transform-origin:center center;letter-spacing:0'>M</span>
<span class="t" style='left:396px;top:668.5px;font-size:7px;line-height:16px;color:#000;transform:translateX(-50%);transform-origin:center center;'>M</span>
<span class="t" style='left:402.5px;top:671.5px;font-size:9px;line-height:16px;color:#000;transform:translateX(-50%);transform-origin:center center;'>D</span>
<div class="tb" style="left:409px;top:668px;width:36px;height:20px"></div>
<span class="t" style='left:427px;top:670px;font-size:11.5px;line-height:16px;color:#000;font-family:"Liberation Sans","IPAGothic","Noto Sans CJK JP",sans-serif;transform:translateX(-50%) scaleX(1.087);transform-origin:center center;'>ｴｯｼﾞ</span>
<div class="sep" style="left:447px;top:669px;height:19px"></div>
<span class="t" style='left:456.3px;top:669.5px;font-size:13px;line-height:16px;color:#000;transform:scaleX(0.968);transform-origin:left center;'>mode</span>
<div class="arr" style="left:493px;top:677px;border-left-width:3.5px;border-right-width:3.5px"></div>
<div class="tb" style="left:503px;top:668px;width:49px;height:20px"></div>
<span class="t" style='left:508.7px;top:669.5px;font-size:13px;line-height:16px;color:#000;transform:scaleX(1.035);transform-origin:left center;'>Wire+</span>
<div class="sep" style="left:555px;top:669px;height:19px"></div>
<div class="tb" style="left:558px;top:668px;width:24px;height:20px"></div>
<span class="t" style='left:570px;top:670px;font-size:12px;line-height:16px;color:#000;transform:translateX(-50%);transform-origin:center center;'>影</span>
<span class="t" style='left:587.5px;top:670px;font-size:12px;line-height:16px;color:#000;transform:scaleX(0.974);transform-origin:left center;'>S影</span>
<div class="sep" style="left:616px;top:669px;height:19px"></div>
<div class="tb" style="left:620px;top:668px;width:23px;height:20px"></div>
<span class="t" style='left:631.5px;top:670px;font-size:12px;line-height:16px;color:#000;transform:translateX(-50%);transform-origin:center center;'>正</span>
<div class="sep" style="left:646px;top:669px;height:19px"></div>
</body></html>
